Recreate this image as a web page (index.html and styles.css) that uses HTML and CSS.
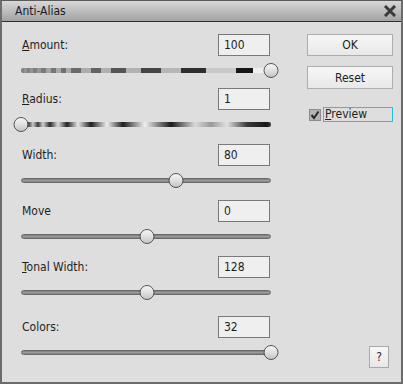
FILE: index.html
```html
<!DOCTYPE html>
<html lang="en">
<head>
    <meta charset="UTF-8">
    <title>Anti-Alias</title>
    <link rel="stylesheet" href="styles.css">
</head>
<body>
    <div class="dialog">
        <div class="titlebar">
            <span class="title">Anti-Alias</span>
            <svg class="close" width="12" height="12" viewBox="0 0 12 12">
                <path d="M2 2 L10 10 M10 2 L2 10" stroke="#3a3a3a" stroke-width="3" stroke-linecap="square"/>
            </svg>
        </div>

        <div class="content">
            <div class="controls">
                <div class="group group-first">
                    <div class="field">
                        <label><u>A</u>mount:</label>
                        <div class="value">100</div>
                    </div>
                    <div class="slider">
                        <div class="track track-amount"></div>
                        <div class="thumb" style="left: 100%"></div>
                    </div>
                </div>

                <div class="group">
                    <div class="field">
                        <label><u>R</u>adius:</label>
                        <div class="value">1</div>
                    </div>
                    <div class="slider">
                        <div class="track track-radius"></div>
                        <div class="thumb" style="left: 0%"></div>
                    </div>
                </div>

                <div class="group">
                    <div class="field">
                        <label>Width:</label>
                        <div class="value">80</div>
                    </div>
                    <div class="slider">
                        <div class="track"></div>
                        <div class="thumb" style="left: 62%"></div>
                    </div>
                </div>

                <div class="group">
                    <div class="field">
                        <label>Move</label>
                        <div class="value">0</div>
                    </div>
                    <div class="slider">
                        <div class="track"></div>
                        <div class="thumb" style="left: 50.4%"></div>
                    </div>
                </div>

                <div class="group">
                    <div class="field">
                        <label><u>T</u>onal Width:</label>
                        <div class="value">128</div>
                    </div>
                    <div class="slider">
                        <div class="track"></div>
                        <div class="thumb" style="left: 50.4%"></div>
                    </div>
                </div>

                <div class="group group-last">
                    <div class="field">
                        <label>Colors:</label>
                        <div class="value">32</div>
                    </div>
                    <div class="slider">
                        <div class="track"></div>
                        <div class="thumb" style="left: 100%"></div>
                    </div>
                </div>
            </div>

            <div class="side">
                <button class="btn">OK</button>
                <button class="btn btn-reset">Reset</button>
                <div class="check">
                    <span class="box">
                        <svg width="10" height="10" viewBox="0 0 10 10">
                            <path d="M1.5 5 L4 8 L8.5 1.5" fill="none" stroke="#2a2a2a" stroke-width="2"/>
                        </svg>
                    </span>
                    <span class="check-label"><u>P</u>review</span>
                </div>
                <button class="help">?</button>
            </div>
        </div>
    </div>
</body>
</html>
```

FILE: styles.css
```css
* {
    margin: 0;
    padding: 0;
    box-sizing: border-box;
}

body {
    width: 403px;
    height: 384px;
    background: #dedede;
    font-family: "DejaVu Sans Condensed", "DejaVu Sans", sans-serif;
    font-size: 12px;
    color: #1e1e1e;
}

.dialog {
    width: 403px;
    height: 384px;
    display: flex;
    flex-direction: column;
    border: 2px solid #6c6c6c;
    border-top: 1px solid #5a5a5a;
    background: #dedede;
}

.titlebar {
    height: 21px;
    display: flex;
    align-items: center;
    justify-content: space-between;
    padding: 0 5px 0 13px;
    background: linear-gradient(#d8d8d8 0%, #c0c0c0 45%, #a2a2a2 100%);
    border-bottom: 1px solid #2e2e2e;
}

.title {
    font-size: 12px;
    color: #1a1a2a;
}

.close {
    display: block;
}

.content {
    flex: 1;
    display: flex;
}

.controls {
    width: 268px;
    padding: 12px 0 0 20px;
}

.group {
    height: 56px;
}

.group-first {
    height: 54px;
}

.group-last {
    margin-top: 4px;
}

.field {
    display: flex;
    justify-content: space-between;
    align-items: center;
    height: 22px;
}

.value {
    width: 52px;
    height: 22px;
    line-height: 20px;
    padding-left: 5px;
    background: #efefef;
    border: 1px solid #7a7a7a;
}

.slider {
    position: relative;
    display: flex;
    align-items: center;
    height: 15px;
    margin: 7px -1px 0 -1px;
}

.track {
    flex: 1;
    height: 5px;
    border-radius: 3px;
    background: linear-gradient(#7a7a7a, #9a9a9a 50%, #7e7e7e);
    border: 1px solid #6a6a6a;
}

.track-amount {
    border: none;
    border-radius: 2px;
    background: linear-gradient(90deg,
        #838383 0, #838383 3px, #929292 3px, #929292 6px,
        #818181 6px, #818181 9px, #949494 9px, #949494 12px,
        #7f7f7f 12px, #7f7f7f 16px, #979797 16px, #979797 20px,
        #7b7b7b 20px, #7b7b7b 25px, #a4a4a4 25px, #a4a4a4 30px,
        #767676 30px, #767676 35px, #a8a8a8 35px, #a8a8a8 40px,
        #707070 40px, #707070 45px, #aaaaaa 45px, #aaaaaa 50px,
        #6a6a6a 50px, #6a6a6a 60px, #acacac 60px, #acacac 70px,
        #626262 70px, #626262 80px, #b0b0b0 80px, #b0b0b0 90px,
        #555555 90px, #555555 105px, #b2b2b2 105px, #b2b2b2 120px,
        #444444 120px, #444444 140px, #b6b6b6 140px, #b6b6b6 160px,
        #2e2e2e 160px, #2e2e2e 185px, #c8c8c8 185px, #c8c8c8 215px,
        #161616 215px, #161616 232px, #f0f0f0 232px, #f0f0f0 100%);
}

.track-radius {
    border: none;
    border-radius: 2px;
    background: linear-gradient(90deg,
        #8a8a8a 0, #505050 8px, #c8c8c8 12px, #3a3a3a 17px,
        #d0d0d0 22px, #2a2a2a 29px, #dcdcdc 37px, #222 46px,
        #e6e6e6 57px, #1c1c1c 70px, #eeeeee 86px, #1e1e1e 102px,
        #f0f0f0 124px, #1a1a1a 150px, #d8d8d8 174px, #9a9a9a 190px,
        #e0e0e0 206px, #3a3a3a 226px, #161616 246px, #444 100%);
}

.thumb {
    position: absolute;
    top: 0;
    width: 15px;
    height: 15px;
    border-radius: 50%;
    transform: translateX(-50%);
    background: linear-gradient(#f6f6f6, #e0e0e0 50%, #c4c4c4);
    border: 1px solid #555;
}

.side {
    width: 86px;
    margin-left: 37px;
    padding: 12px 0 14px 0;
    display: flex;
    flex-direction: column;
}

.btn {
    height: 22px;
    font-family: inherit;
    font-size: 12px;
    color: #1e1e1e;
    background: linear-gradient(#f7f7f7, #e8e8e8);
    border: 1px solid #adadad;
}

.btn-reset {
    height: 23px;
    margin-top: 10px;
}

.check {
    display: flex;
    align-items: center;
    margin-top: 18px;
    margin-left: 2px;
    height: 15px;
}

.box {
    width: 12px;
    height: 12px;
    display: flex;
    align-items: center;
    justify-content: center;
    background: #b4b4b4;
    border: 1px solid #8c8c8c;
}

.box svg {
    display: block;
}

.check-label {
    width: 70px;
    height: 15px;
    line-height: 13px;
    margin-left: 2px;
    padding-left: 1px;
    border: 1px solid #22c0f0;
}

.help {
    margin-top: auto;
    align-self: flex-end;
    margin-right: 4px;
    width: 20px;
    height: 22px;
    font-family: inherit;
    font-size: 12px;
    color: #2a2040;
    background: linear-gradient(#f7f7f7, #e8e8e8);
    border: 1px solid #a8a8a8;
}
```
